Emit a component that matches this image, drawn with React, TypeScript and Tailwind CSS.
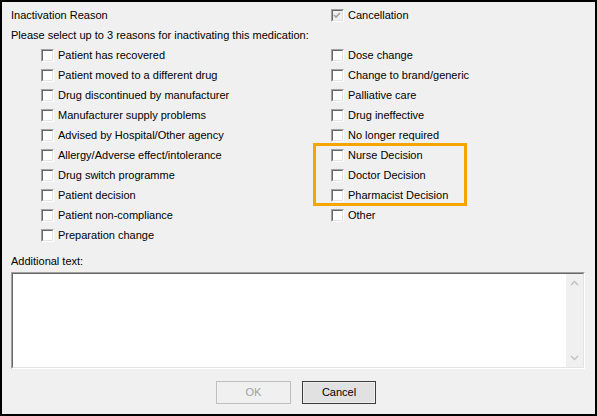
import React from "react";

const left = [
  "Patient has recovered",
  "Patient moved to a different drug",
  "Drug discontinued by manufacturer",
  "Manufacturer supply problems",
  "Advised by Hospital/Other agency",
  "Allergy/Adverse effect/intolerance",
  "Drug switch programme",
  "Patient decision",
  "Patient non-compliance",
  "Preparation change",
];
const right = [
  "Dose change",
  "Change to brand/generic",
  "Palliative care",
  "Drug ineffective",
  "No longer required",
  "Nurse Decision",
  "Doctor Decision",
  "Pharmacist Decision",
  "Other",
];

function Box({ checked = false, disabled = false }: { checked?: boolean; disabled?: boolean }) {
  return (
    <span
      className={`relative block h-[13px] w-[13px] shrink-0 border border-t-[#a0a0a0] border-l-[#a0a0a0] border-r-white border-b-white ${
        disabled ? "bg-[#f0f0f0]" : "bg-white"
      }`}
    >
      <span className="absolute inset-0 border border-t-[#696969] border-l-[#696969] border-r-[#e3e3e3] border-b-[#e3e3e3]" />
      {checked && (
        <svg className="absolute left-[1px] top-[1px]" width="9" height="9" viewBox="0 0 9 9">
          <path d="M1 4 L3 6 L7 2" stroke="#a0a0a0" strokeWidth="1.6" fill="none" />
        </svg>
      )}
    </span>
  );
}

function Item({ label, checked, disabled }: { label: string; checked?: boolean; disabled?: boolean }) {
  return (
    <div className="flex h-[20px] items-center gap-[4px]">
      <Box checked={checked} disabled={disabled} />
      <span className="whitespace-nowrap">{label}</span>
    </div>
  );
}

export default function App() {
  return (
    <div
      className="relative h-[416px] w-[597px] border-2 border-black bg-[#f0f0f0] text-[11px] text-black"
      style={{ fontFamily: "Tahoma, 'Liberation Sans', Arial, sans-serif" }}
    >
      <div className="mt-[3px] flex h-[20px] items-center">
        <span className="w-[329px] pl-[9px]">Inactivation Reason</span>
        <div className="flex items-center gap-[4px]">
          <Box checked disabled />
          <span>Cancellation</span>
        </div>
      </div>
      <div className="flex h-[20px] items-center pl-[9px]">
        Please select up to 3 reasons for inactivating this medication:
      </div>
      <div className="flex">
        <div className="w-[329px] pl-[39px]">
          {left.map((l) => (
            <Item key={l} label={l} />
          ))}
        </div>
        <div className="flex flex-col">
          {right.map((l) => (
            <Item key={l} label={l} />
          ))}
        </div>
      </div>
      <div className="absolute left-[311px] top-[141px] h-[63px] w-[154px] border-[3px] border-[#f5a500]" />
      <div className="mt-[6px] flex h-[20px] items-center pl-[9px]">Additional text:</div>
      <div className="ml-[9px] mt-[1px] flex h-[97px] w-[574px] border border-t-[#a0a0a0] border-l-[#a0a0a0] border-r-white border-b-white">
        <div className="flex flex-1 border border-t-[#696969] border-l-[#696969] border-r-[#e3e3e3] border-b-[#e3e3e3] bg-white">
          <div className="flex-1" />
          <div className="flex w-[17px] flex-col items-center justify-between bg-[#f0f0f0] py-[6px]">
            <svg width="9" height="6" viewBox="0 0 9 6">
              <path d="M1 5 L4.5 1.5 L8 5" stroke="#c2c2c2" strokeWidth="1.5" fill="none" />
            </svg>
            <svg width="9" height="6" viewBox="0 0 9 6">
              <path d="M1 1 L4.5 4.5 L8 1" stroke="#c2c2c2" strokeWidth="1.5" fill="none" />
            </svg>
          </div>
        </div>
      </div>
      <div className="mt-[12px] flex gap-[11px] pl-[214px]">
        <button className="h-[23px] w-[75px] border border-[#bfbfbf] bg-[#f0f0f0] text-[#a0a0a0]">OK</button>
        <button className="h-[23px] w-[74px] border border-[#3c3c3c] bg-[#e1e1e1] shadow-[inset_0_0_0_1px_#f0f0f0]">
          Cancel
        </button>
      </div>
    </div>
  );
}
